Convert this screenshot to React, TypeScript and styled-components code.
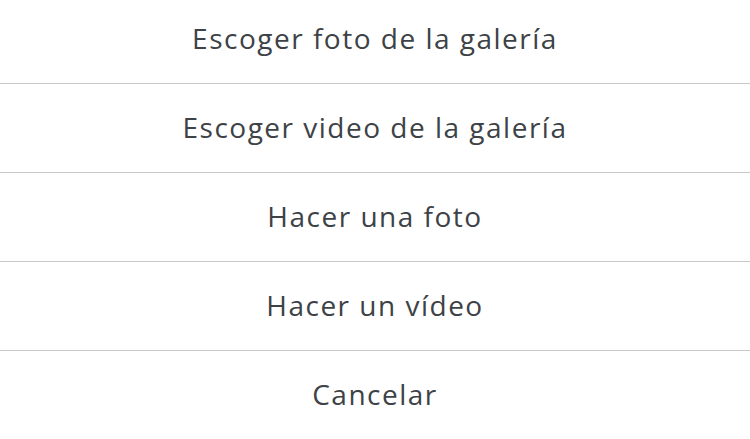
import React from 'react';
import styled, { createGlobalStyle } from 'styled-components';

const GlobalStyle = createGlobalStyle`
  html, body {
    margin: 0;
    padding: 0;
    background-color: #ffffff;
  }
`;

const Sheet = styled.div`
  width: 750px;
  height: 439px;
  overflow: hidden;
  display: flex;
  flex-direction: column;
  background-color: #ffffff;
  font-family: "Open Sans", "Liberation Sans", sans-serif;
`;

const Option = styled.button<{ clipped?: boolean }>`
  flex: none;
  box-sizing: border-box;
  height: ${props => (props.clipped ? '84px' : '89px')};
  padding: ${props => (props.clipped ? '0 0 7px 0' : '0 0 3px 0')};
  margin: 0;
  border: none;
  border-bottom: 1px solid #c9c9c9;
  background: none;
  display: flex;
  align-items: center;
  justify-content: center;
  font-family: inherit;
  font-size: 28px;
  font-weight: 400;
  letter-spacing: 1.5px;
  color: #3d4246;
  cursor: pointer;

  &:last-child {
    border-bottom: none;
  }
`;

const options = [
  'Escoger foto de la galería',
  'Escoger video de la galería',
  'Hacer una foto',
  'Hacer un vídeo',
  'Cancelar'
];

const App: React.FC = () => {
  return (
    <>
      <GlobalStyle />
      <Sheet>
        {options.map((label, i) => (
          <Option key={label} clipped={i === 0}>
            {label}
          </Option>
        ))}
      </Sheet>
    </>
  );
};

export default App;
